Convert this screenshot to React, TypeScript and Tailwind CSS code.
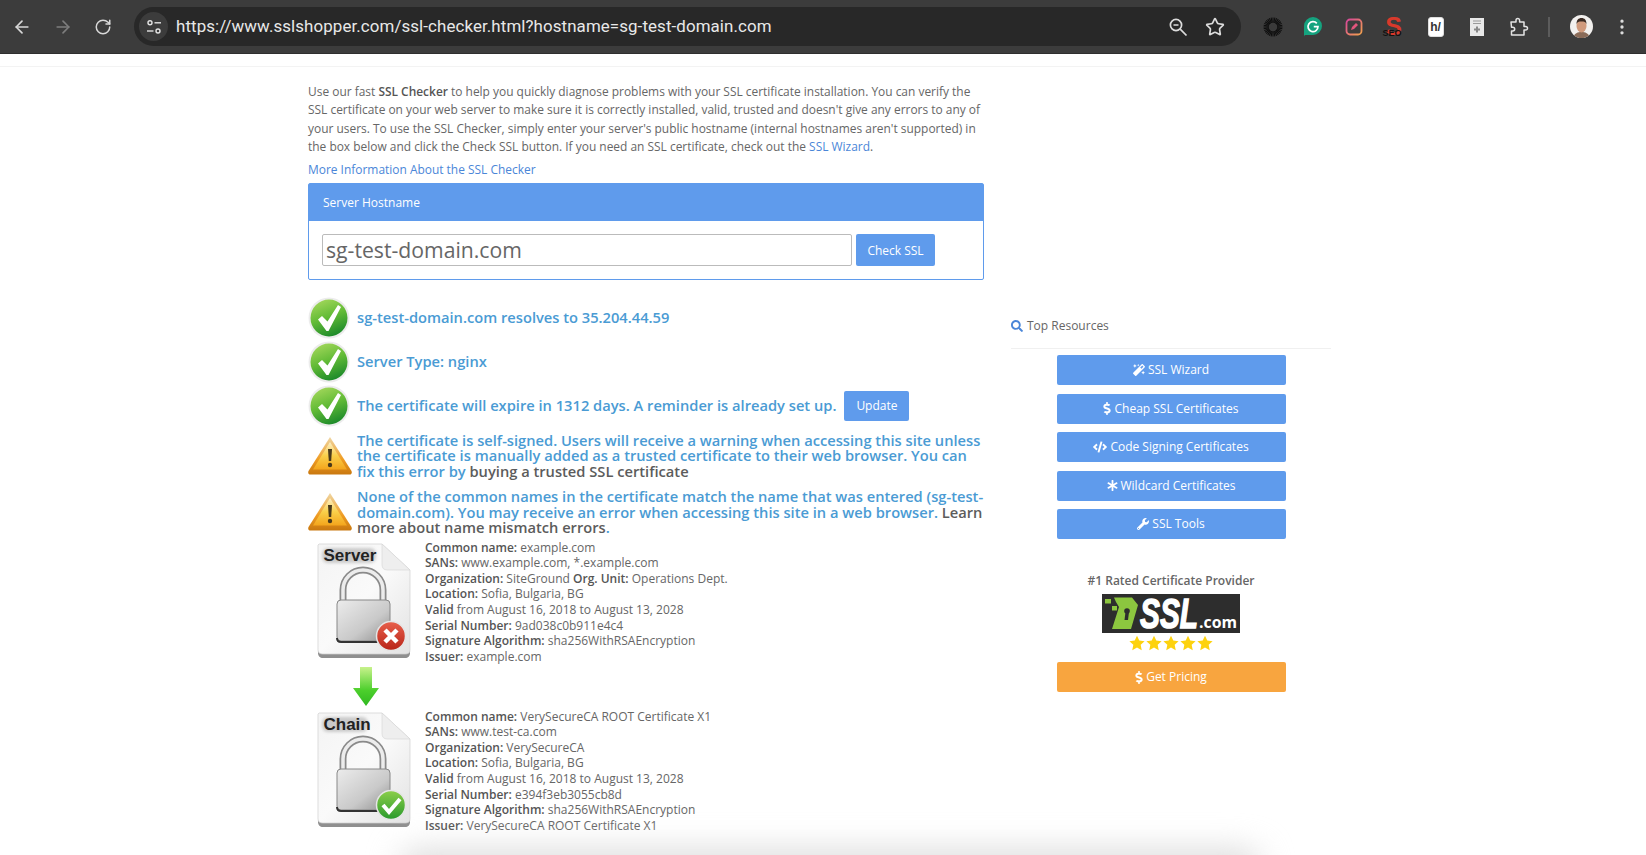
import React from "react";
import { ArrowLeft, ArrowRight, RotateCw, Star, MoreVertical } from "lucide-react";
import { FaMagic, FaDollarSign, FaCode, FaAsterisk, FaWrench, FaSearch } from "react-icons/fa";

function Tune() {
  return (
    <svg width="16" height="16" viewBox="0 0 16 16" fill="none" stroke="#e3e3e3" strokeWidth="1.400">
      <circle cx="4" cy="3.800" r="2" />
      <path d="M8.500 3.800H15" />
      <circle cx="12" cy="12" r="2" />
      <path d="M1 12H7.500" />
    </svg>
  );
}

function ZoomMinus() {
  return (
    <svg width="20" height="20" viewBox="0 0 20 20" fill="none" stroke="#dcdcdc" strokeWidth="1.700" className="ml-auto">
      <circle cx="8" cy="8" r="5.600" />
      <path d="M5.500 8h5M12.200 12.200 18.500 18.500" />
    </svg>
  );
}

function SunIcon() {
  const rays = Array.from({ length: 32 }, (_, i) => i * (360 / 32));
  return (
    <svg width="20" height="20" viewBox="0 0 20 20">
      {rays.map((a) => (
        <line key={a} x1="10" y1="0.500" x2="10" y2="6" stroke="#0c0c0c" strokeWidth="1" transform={`rotate(${a} 10 10)`} />
      ))}
      <circle cx="10" cy="10" r="4.200" fill="#3a3a3a" />
    </svg>
  );
}

function Grammarly() {
  return (
    <svg width="20" height="22" viewBox="0 0 20 22">
      <path d="M10 1a9 9 0 0 1 0 18H2.500c-1 0-1.500.9-1.500 2V10a9 9 0 0 1 9-9Z" fill="#15a37f" />
      <path d="M13.800 7.400A5 5 0 1 0 15 10.600H10.800" fill="none" stroke="#fff" strokeWidth="1.700" />
    </svg>
  );
}

function PinkSquare() {
  return (
    <svg width="18" height="18" viewBox="0 0 18 18">
      <defs>
        <linearGradient id="pinkg" x1="0" y1="0" x2="1" y2="1">
          <stop offset="0" stopColor="#d8469a" />
          <stop offset="1" stopColor="#f2a24c" />
        </linearGradient>
      </defs>
      <rect x="1.500" y="1.500" width="15" height="15" rx="3.500" fill="#3c3c3c" stroke="url(#pinkg)" strokeWidth="1.800" />
      <path d="M6 12l1-3 4-4 2 2-4 4Z" fill="#e2557d" />
    </svg>
  );
}

function SeoIcon() {
  return (
    <div className="relative w-[18px] h-[24px] flex items-start justify-center">
      <span className="text-[25px] leading-[22px] font-bold text-[#d8392b] font-['Liberation_Sans',sans-serif]">S</span>
      <span className="absolute bottom-[1px] left-[-2px] text-[9px] leading-[9px] font-bold text-[#111] font-['Liberation_Sans',sans-serif]">SEO</span>
    </div>
  );
}

function HIcon() {
  return (
    <div className="w-[16px] h-[20px] bg-white rounded-[3px] flex items-center justify-center border border-[#ddd]">
      <span className="text-[12px] leading-none font-bold text-[#333] font-['Liberation_Sans',sans-serif]">h/</span>
    </div>
  );
}

function DocPlus() {
  return (
    <svg width="14" height="18" viewBox="0 0 14 18">
      <rect width="14" height="18" fill="#e8e8e8" />
      <path d="M3 3h8M3 5.500h8" stroke="#999" strokeWidth="1" />
      <path d="M7 8.500v6M4 11.500h6" stroke="#888" strokeWidth="2" />
    </svg>
  );
}

function PuzzleIcon() {
  return (
    <svg width="20" height="20" viewBox="0 0 20 20" fill="none" stroke="#e3e3e3" strokeWidth="1.500" strokeLinejoin="round">
      <path d="M2 5h5V3.200a1.800 1.800 0 0 1 3.600 0V5H15v4.400h1.700a1.800 1.800 0 0 1 0 3.600H15v5H2.500v-4h1.300a1.900 1.900 0 0 0 0-3.800H2.500Z" />
    </svg>
  );
}

function Avatar() {
  return (
    <svg width="23" height="23" viewBox="0 0 23 23">
      <clipPath id="avc"><circle cx="11.500" cy="11.500" r="11.500" /></clipPath>
      <g clipPath="url(#avc)">
        <rect width="23" height="23" fill="#f2f0ee" />
        <path d="M3 23c1-5 5-6 8.500-6s7.500 1 8.500 6Z" fill="#8a6b58" />
        <ellipse cx="11.500" cy="11" rx="5" ry="6.500" fill="#d09a7c" />
        <path d="M6.500 9c0-4 2-6 5-6s5 2 5 6c-1-2-2-2.500-5-2.500S7.500 7 6.500 9Z" fill="#3a2a22" />
      </g>
    </svg>
  );
}

function CheckIcon() {
  return (
    <svg width="42" height="42" viewBox="0 0 42 42">
      <defs>
        <linearGradient id="chk" x1="0.2" y1="0" x2="0.6" y2="1">
          <stop offset="0" stopColor="#a5d85c" />
          <stop offset="0.5" stopColor="#62bb36" />
          <stop offset="1" stopColor="#1c8a2a" />
        </linearGradient>
      </defs>
      <circle cx="21" cy="21" r="20.500" fill="#ececec" />
      <circle cx="21" cy="21" r="18.500" fill="url(#chk)" />
      <path d="M10 22.500l4-3.500 5.500 5.500L30 8l3 2-12.500 24h-2Z" fill="#fff" />
    </svg>
  );
}

function WarnIcon() {
  return (
    <svg width="44" height="40" viewBox="0 0 44 40">
      <defs>
        <linearGradient id="wrn" x1="0" y1="0" x2="0" y2="1">
          <stop offset="0" stopColor="#fbeec8" />
          <stop offset="0.5" stopColor="#fad04a" />
          <stop offset="1" stopColor="#f4a51c" />
        </linearGradient>
        <linearGradient id="wrb" x1="0" y1="0" x2="0" y2="1">
          <stop offset="0" stopColor="#efd6a4" />
          <stop offset="0.6" stopColor="#ef9c22" />
          <stop offset="1" stopColor="#c9780f" />
        </linearGradient>
      </defs>
      <path d="M22 1 43.500 35c.8 2 0 3.500-2 3.500H2.500c-2 0-2.800-1.500-2-3.500Z" fill="url(#wrb)" />
      <path d="M22 6 39 33.500H5Z" fill="url(#wrn)" />
      <path d="M20 13h4l-.8 12h-2.400Z" fill="#4a3a1c" />
      <circle cx="22" cy="29" r="2.200" fill="#4a3a1c" />
    </svg>
  );
}

function CertIcon({ label, ok, id }: { label: string; ok: boolean; id: string }) {
  return (
    <svg width="96" height="117" viewBox="0 0 96 117">
      <defs>
        <linearGradient id={`${id}doc`} x1="0" y1="0" x2="1" y2="1">
          <stop offset="0" stopColor="#f4f4f4" />
          <stop offset="0.5" stopColor="#fafafa" />
          <stop offset="1" stopColor="#e2e2e2" />
        </linearGradient>
        <linearGradient id={`${id}lock`} x1="0" y1="0" x2="1" y2="1">
          <stop offset="0" stopColor="#ececec" />
          <stop offset="0.6" stopColor="#c9c9c9" />
          <stop offset="1" stopColor="#8f8f8f" />
        </linearGradient>
        <linearGradient id={`${id}b`} x1="0" y1="0" x2="0" y2="1">
          <stop offset="0" stopColor={ok ? "#8ccf4a" : "#e8604c"} />
          <stop offset="1" stopColor={ok ? "#2a9a2c" : "#b82418"} />
        </linearGradient>
        <filter id={`${id}s`} x="-20%" y="-40%" width="140%" height="180%">
          <feGaussianBlur stdDeviation="1.600" />
        </filter>
      </defs>
      <path d="M2 3 66 2 94 28V110c0 3-2 5-5 5H7c-3 0-5-2-5-5Z" fill="#8f8f8f" />
      <path d="M3 1H66L94 27V107c0 3-2 4-5 4H7c-3 0-5-1-5-4V2Z" fill={`url(#${id}doc)`} stroke="#d0d0d0" strokeWidth="0.700" />
      <path d="M66 1V22c0 3 2 5 5 5H94Z" fill="#eeeeee" stroke="#d5d5d5" strokeWidth="0.600" />
      <rect x="6" y="5" width={label === "Server" ? 54 : 46} height="15" rx="6" fill="#8a8a8a" filter={`url(#${id}s)`} opacity="0.4" />
      <path d="M27 62V47a20 20 0 0 1 40 0V62" fill="none" stroke="#8a8a8a" strokeWidth="7" />
      <path d="M27 62V47a20 20 0 0 1 40 0V62" fill="none" stroke="#ececec" strokeWidth="3.500" />
      <rect x="21" y="57" width="53" height="41" rx="4" fill={`url(#${id}lock)`} stroke="#888" strokeWidth="1" />
      <path d="M21 95c0 3 1 4 4 4H74" fill="none" stroke="#333" strokeWidth="2" />
      <text x="7.500" y="17.500" fontFamily="'Liberation Sans', Arial, sans-serif" fontWeight="700" fontSize="17" fill="#222">
        {label}
      </text>
      <circle cx="75" cy="93" r="14.500" fill={`url(#${id}b)`} stroke="#e5e5e5" strokeWidth="1.500" />
      {ok ? (
        <path d="M67 93l6 7 11-13" fill="none" stroke="#fff" strokeWidth="4" />
      ) : (
        <path d="M69 87l12 12M81 87 69 99" fill="none" stroke="#fff" strokeWidth="4.500" />
      )}
    </svg>
  );
}

function DownArrow() {
  return (
    <svg width="26" height="39" viewBox="0 0 26 39">
      <defs>
        <linearGradient id="arr" x1="0" y1="0" x2="0" y2="1">
          <stop offset="0" stopColor="#c8f28c" />
          <stop offset="0.6" stopColor="#4ccf2c" />
          <stop offset="1" stopColor="#2fb820" />
        </linearGradient>
      </defs>
      <path d="M7 0H19V21H26L13 39 0 21H7Z" fill="url(#arr)" />
    </svg>
  );
}

function Logo() {
  return (
    <svg width="138" height="39" viewBox="0 0 138 39" className="block">
      <rect width="138" height="39" fill="#2d2d2d" />
      <path d="M12 3.500H30L36 11 29 35H10L17 13 14 8Z" fill="#8cc63f" />
      <rect x="3" y="5" width="6" height="4.500" fill="#8cc63f" />
      <rect x="10" y="12" width="5" height="4.500" fill="#8cc63f" />
      <circle cx="25" cy="17" r="2.800" fill="#2d2d2d" />
      <path d="M23.500 18h3.500l-1 8h-3.500Z" fill="#2d2d2d" />
      <text x="38" y="34" textLength="58" lengthAdjust="spacingAndGlyphs" fontFamily="'Liberation Sans', Arial, sans-serif" fontStyle="italic" fontWeight="700" fontSize="43" fill="#fff" stroke="#fff" strokeWidth="1.500">
        SSL
      </text>
      <text x="97" y="34" textLength="38" lengthAdjust="spacingAndGlyphs" fontFamily="'Open Sans', Arial, sans-serif" fontWeight="700" fontSize="15.500" fill="#fff">
        .com
      </text>
    </svg>
  );
}

function Stars() {
  return (
    <div className="flex justify-center gap-[1px] h-[18px]">
      {[0, 1, 2, 3, 4].map((i) => (
        <svg key={i} width="16" height="16" viewBox="0 0 24 24" fill="#fdd20e">
          <path d="M12 1l3.400 7.300 8 1-5.900 5.500 1.600 8L12 18.800 4.900 22.800l1.600-8L.6 9.300l8-1Z" />
        </svg>
      ))}
    </div>
  );
}

function Detail({ rows }: { rows: [string, string, string?, string?][] }) {
  return (
    <div className="pt-[1px] text-[12px] leading-[15.600px] text-[#666] whitespace-nowrap">
      {rows.map((r, i) => (
        <div key={i}>
          <b className="font-semibold text-[#555]">{r[0]}</b> {r[1]}
          {r[2] ? (
            <>
              {" "}
              <b className="font-semibold text-[#555]">{r[2]}</b> {r[3]}
            </>
          ) : null}
        </div>
      ))}
    </div>
  );
}

function SideBtn({ icon, label, orange }: { icon: React.ReactNode; label: string; orange?: boolean }) {
  return (
    <div className={`w-[229px] h-[30px] rounded-[2px] flex items-center justify-center gap-[3px] text-white text-[12px] ${orange ? "bg-[#f8a53f]" : "bg-[#5f9bec]"}`}>
      {icon}
      <span>{label}</span>
    </div>
  );
}

export default function App() {
  const toolIcon = "text-[#dcdcdc]";
  const dollar = <FaDollarSign className="w-[8px] h-[13px]" />;
  return (
    <div className="relative w-[1646px] h-[855px] overflow-hidden bg-white font-['Open_Sans',sans-serif]">
      {/* browser toolbar */}
      <div className="h-[54px] bg-[#3c3c3c] border-b border-[#2e2e2e] flex items-center font-['Roboto',sans-serif]">
        <div className="w-[134px] flex items-center pl-[12px] gap-[21px] shrink-0">
          <ArrowLeft size={20} className="text-[#d8d8d8]" />
          <ArrowRight size={20} className="text-[#7d7d7d]" />
          <RotateCw size={18} className="text-[#d8d8d8]" />
        </div>
        <div className="w-[1107px] h-[39px] rounded-full bg-[#282828] flex items-center pl-[5px] pr-[16px] shrink-0">
          <div className="w-[29px] h-[29px] rounded-full bg-[#3c3c3c] flex items-center justify-center">
            <Tune />
          </div>
          <span className="ml-[8px] text-[16.900px] text-[#e8e8e8] tracking-[0.1px]">https://www.sslshopper.com/ssl-checker.html?hostname=sg-test-domain.com</span>
          <ZoomMinus />
          <Star size={20} className={`${toolIcon} ml-[17px]`} />
        </div>
        <div className="flex items-center flex-1 pl-[21px]">
          <div className="w-[21px] flex justify-center"><SunIcon /></div>
          <div className="w-[21px] flex justify-center ml-[19px]"><Grammarly /></div>
          <div className="w-[21px] flex justify-center ml-[20px]"><PinkSquare /></div>
          <div className="w-[21px] flex justify-center ml-[19px]"><SeoIcon /></div>
          <div className="w-[21px] flex justify-center ml-[21px]"><HIcon /></div>
          <div className="w-[21px] flex justify-center ml-[20px]"><DocPlus /></div>
          <div className="w-[21px] flex justify-center ml-[21px]"><PuzzleIcon /></div>
          <div className="w-[2px] h-[20px] bg-[#5c5c5c] ml-[19px]" />
          <div className="ml-[20px]"><Avatar /></div>
          <MoreVertical size={20} className={`${toolIcon} ml-[19px]`} />
        </div>
      </div>
      <div className="h-[13px] border-b border-[#f3f3f3]" />

      {/* page */}
      <div className="flex pl-[308px]">
        <div className="w-[676px] shrink-0">
          <p className="pt-[16px] text-[11.950px] leading-[18.400px] text-[#666] whitespace-nowrap">
            Use our fast <b className="font-semibold text-[#555]">SSL Checker</b> to help you quickly diagnose problems with your SSL certificate installation. You can verify the
            <br />
            SSL certificate on your web server to make sure it is correctly installed, valid, trusted and doesn't give any errors to any of
            <br />
            your users. To use the SSL Checker, simply enter your server's public hostname (internal hostnames aren't supported) in
            <br />
            the box below and click the Check SSL button. If you need an SSL certificate, check out the <span className="text-[#4a86d8]">SSL Wizard</span>.
          </p>
          <div className="mt-[4px] h-[18px] text-[11.950px] leading-[18px] text-[#4a86d8]">More Information About the SSL Checker</div>

          <div className="mt-[4px] h-[97px] border border-[#5f9bec] rounded-[2px]">
            <div className="h-[37px] bg-[#5f9bec] flex items-center pl-[14px] pt-[1px] text-[12px] text-white">Server Hostname</div>
            <div className="flex pl-[13px] pt-[13px]">
              <div className="w-[530px] h-[32px] border border-[#bbb] rounded-[2px] flex items-center pl-[3px] text-[21.200px] text-[#666]">sg-test-domain.com</div>
              <div className="w-[79px] h-[32px] ml-[4px] bg-[#5f9bec] rounded-[2px] flex items-center justify-center pt-[2px] text-[12px] text-white">Check SSL</div>
            </div>
          </div>

          <div className="mt-[16px] text-[14.680px] leading-[15.500px] font-semibold text-[#4a9bd4] whitespace-nowrap">
            <div className="h-[44px] flex items-center">
              <div className="w-[49px] shrink-0"><CheckIcon /></div>
              <span>sg-test-domain.com resolves to 35.204.44.59</span>
            </div>
            <div className="h-[44px] flex items-center">
              <div className="w-[49px] shrink-0"><CheckIcon /></div>
              <span>Server Type: nginx</span>
            </div>
            <div className="h-[44px] flex items-center">
              <div className="w-[49px] shrink-0"><CheckIcon /></div>
              <span>The certificate will expire in 1312 days. A reminder is already set up.</span>
              <div className="ml-[8px] w-[65px] h-[30px] bg-[#5f9bec] rounded-[2px] flex items-center justify-center text-[12px] font-normal text-white">Update</div>
            </div>
            <div className="mt-[5px] flex items-center">
              <div className="w-[49px] shrink-0"><WarnIcon /></div>
              <span>
                The certificate is self-signed. Users will receive a warning when accessing this site unless
                <br />
                the certificate is manually added as a trusted certificate to their web browser. You can
                <br />
                fix this error by <span className="text-[#5c5c5c]">buying a trusted SSL certificate</span>
              </span>
            </div>
            <div className="mt-[10px] flex items-center">
              <div className="w-[49px] shrink-0"><WarnIcon /></div>
              <span>
                None of the common names in the certificate match the name that was entered (sg-test-
                <br />
                domain.com). You may receive an error when accessing this site in a web browser. <span className="text-[#5c5c5c]">Learn</span>
                <br />
                <span className="text-[#5c5c5c]">more about name mismatch errors</span>.
              </span>
            </div>
          </div>

          <div className="mt-[3px] h-[128px] flex">
            <div className="w-[117px] shrink-0 pl-[8px] pt-[4px]">
              <CertIcon label="Server" ok={false} id="srv" />
            </div>
            <Detail
              rows={[
                ["Common name:", "example.com"],
                ["SANs:", "www.example.com, *.example.com"],
                ["Organization:", "SiteGround", "Org. Unit:", "Operations Dept."],
                ["Location:", "Sofia, Bulgaria, BG"],
                ["Valid", "from August 16, 2018 to August 13, 2028"],
                ["Serial Number:", "9ad038c0b911e4c4"],
                ["Signature Algorithm:", "sha256WithRSAEncryption"],
                ["Issuer:", "example.com"],
              ]}
            />
          </div>
          <div className="h-[41px] pl-[45px]">
            <DownArrow />
          </div>
          <div className="h-[128px] flex">
            <div className="w-[117px] shrink-0 pl-[8px] pt-[4px]">
              <CertIcon label="Chain" ok id="chn" />
            </div>
            <Detail
              rows={[
                ["Common name:", "VerySecureCA ROOT Certificate X1"],
                ["SANs:", "www.test-ca.com"],
                ["Organization:", "VerySecureCA"],
                ["Location:", "Sofia, Bulgaria, BG"],
                ["Valid", "from August 16, 2018 to August 13, 2028"],
                ["Serial Number:", "e394f3eb3055cb8d"],
                ["Signature Algorithm:", "sha256WithRSAEncryption"],
                ["Issuer:", "VerySecureCA ROOT Certificate X1"],
              ]}
            />
          </div>
        </div>

        {/* sidebar */}
        <div className="w-[320px] ml-[27px] shrink-0 pt-[249px]">
          <div className="h-[33px] border-b border-[#f0f0f0] flex items-start gap-[4px] pt-[1px] text-[12px] leading-[18px] text-[#666]">
            <FaSearch size={12} className="text-[#4a86d8] mt-[3px]" />
            <span>Top Resources</span>
          </div>
          <div className="flex flex-col items-center w-[320px] pt-[6px] gap-[8.500px]">
            <SideBtn icon={<FaMagic size={12} />} label="SSL Wizard" />
            <SideBtn icon={dollar} label="Cheap SSL Certificates" />
            <SideBtn icon={<FaCode size={14} />} label="Code Signing Certificates" />
            <SideBtn icon={<FaAsterisk size={11} />} label="Wildcard Certificates" />
            <SideBtn icon={<FaWrench size={12} />} label="SSL Tools" />
          </div>
          <div className="mt-[33px] text-center text-[12px] leading-[18px] font-semibold text-[#666]">#1 Rated Certificate Provider</div>
          <div className="mt-[4px] flex justify-center"><Logo /></div>
          <div className="mt-[2px]"><Stars /></div>
          <div className="mt-[9px] flex justify-center">
            <SideBtn orange icon={dollar} label="Get Pricing" />
          </div>
        </div>
      </div>

      {/* bottom smudge */}
      <div className="absolute left-[400px] bottom-[-26px] w-[860px] h-[30px] bg-[#d8d8d8] blur-[16px] rounded-full" />
    </div>
  );
}
